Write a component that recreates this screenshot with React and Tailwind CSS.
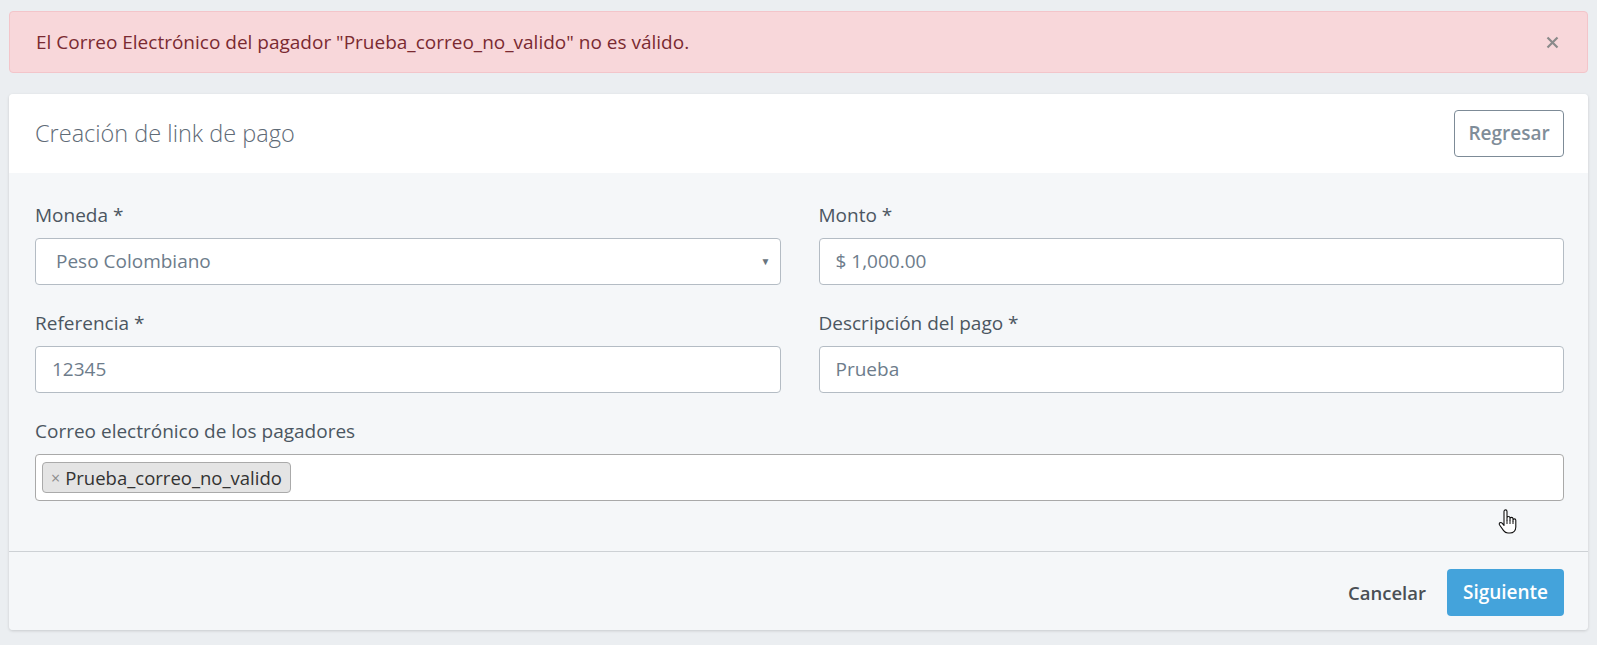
import React from 'react';

const font = { fontFamily: '"Open Sans", "Noto Sans", sans-serif' };

const Field = ({ label, children }) => (
  <div className="mb-[25px]">
    <label className="block text-[19px] leading-[24px] text-[#4b5661] mt-[1px] mb-[11px]">{label}</label>
    {children}
  </div>
);

const TextInput = ({ value }) => (
  <div className="h-[47px] rounded-[4px] border border-[#b4bcc4] bg-white flex items-center px-[16px] text-[19px] text-[#6d7c8b]">
    {value}
  </div>
);

const HandCursor = () => (
  <svg width="22" height="26" viewBox="0 0 22 26" className="absolute left-[1497px] top-[509px]">
    <path
      d="M7 2.5c0-1 .7-1.6 1.5-1.6S10 1.5 10 2.5V11 9c0-.9.7-1.5 1.5-1.5S13 8.1 13 9v2-1.2c0-.8.7-1.4 1.5-1.4S16 9 16 9.8V12v-.8c0-.8.7-1.3 1.4-1.3.8 0 1.4.6 1.4 1.4V18c0 3.5-2.4 6-5.8 6H11c-2 0-3.3-.8-4.4-2.3L2.6 16c-.6-.8-.4-1.7.3-2.2.7-.5 1.6-.3 2.2.4L7 16.4V2.5z"
      fill="#fff"
      stroke="#111"
      strokeWidth="1.1"
      strokeLinejoin="round"
    />
    <path d="M10 11v4M13 11v4M16 12v3" stroke="#111" strokeWidth="1" />
  </svg>
);

export default function App() {
  return (
    <div className="relative min-h-[645px] bg-[#ebeef1] px-[9px] pt-[11px] pb-[16px]" style={font}>
      {/* Alert */}
      <div className="h-[62px] rounded-[4px] border border-[#f3c5ca] bg-[#f8d7da] flex items-center justify-between pl-[26px] pr-[28px]">
        <span className="text-[19px] text-[#7a2a31]">
          El Correo Electrónico del pagador "Prueba_correo_no_valido" no es válido.
        </span>
        <svg width="13" height="13" viewBox="0 0 13 13">
          <path d="M1.5 1.5l10 10M11.5 1.5l-10 10" stroke="#8a8a8a" strokeWidth="2.2" />
        </svg>
      </div>

      {/* Card */}
      <div className="mt-[21px] rounded-[4px] overflow-hidden shadow-[0_1px_3px_rgba(0,0,0,0.15)]">
        <div className="h-[79px] bg-white flex items-center justify-between pl-[26px] pr-[24px]">
          <h1 className="text-[23.5px] font-light text-[#5f6b77]">Creación de link de pago</h1>
          <button className="h-[47px] w-[110px] rounded-[4px] border border-[#7d8b97] text-[19px] font-semibold text-[#7f8d99]">
            Regresar
          </button>
        </div>

        <div className="bg-[#f5f7f9] pl-[26px] pr-[24px] pt-[29px] pb-[25px] border-b border-[#cdd1d5]">
          <div className="grid grid-cols-2 gap-x-[38px]">
            <Field label="Moneda *">
              <div className="h-[47px] rounded-[4px] border border-[#b4bcc4] bg-white flex items-center justify-between pl-[20px] pr-[9px] text-[19px] text-[#6d7c8b]">
                <span>Peso Colombiano</span>
                <span className="text-[10px] text-[#69747e]">▼</span>
              </div>
            </Field>
            <Field label="Monto *">
              <TextInput value="$ 1,000.00" />
            </Field>
            <Field label="Referencia *">
              <TextInput value="12345" />
            </Field>
            <Field label="Descripción del pago *">
              <TextInput value="Prueba" />
            </Field>
          </div>
          <Field label="Correo electrónico de los pagadores">
            <div className="h-[47px] rounded-[4px] border border-[#a9a9a9] bg-white flex items-center px-[6px]">
              <span className="h-[31px] rounded-[4px] border border-[#aaaaaa] bg-[#e4e4e4] flex items-center px-[8px] text-[18.5px] text-[#333]">
                <span className="text-[#8c8c8c] mr-[5px] text-[16px]">×</span>
                Prueba_correo_no_valido
              </span>
            </div>
          </Field>
        </div>

        <div className="bg-[#f5f7f9] flex items-center justify-end gap-[21px] pr-[24px] pt-[17px] pb-[14px]">
          <button className="text-[18.5px] font-semibold text-[#4a4f55]">Cancelar</button>
          <button className="h-[47px] w-[117px] rounded-[4px] bg-[#44a3db] text-[19px] font-semibold text-white">
            Siguiente
          </button>
        </div>
      </div>

      <HandCursor />
    </div>
  );
}
